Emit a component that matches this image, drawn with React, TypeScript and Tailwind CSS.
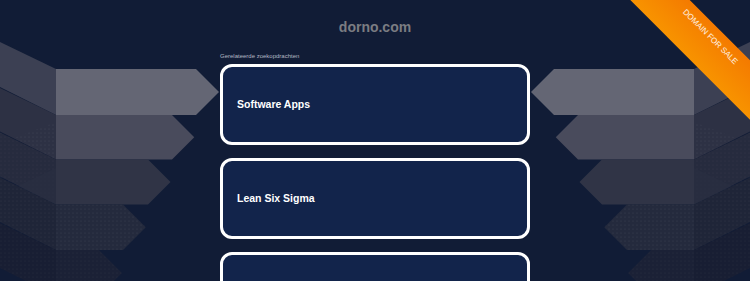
import React from "react";

// related searches shown in the middle column
const searches = ["Software Apps", "Lean Six Sigma", "Cloud Services"];

// the stepped arrow bands behind the page, left half (right half is mirrored)
const bands = [
  { top: 69, bottom: 115, end: 196, body: "#646674", face: "#3c4053" },
  { top: 115, bottom: 159.5, end: 172, body: "#494b5c", face: "#2d3144" },
  { top: 159.5, bottom: 204.5, end: 148, body: "#303446", face: "#262b3e" },
  { top: 204.5, bottom: 250, end: 123, body: "#242a3d", face: "#1f2538" },
  { top: 250, bottom: 296, end: 99, body: "#1b2136", face: "#181e33" },
];

const Side = () => (
  <g>
    {bands.map((b) => {
      const mid = (b.top + b.bottom) / 2;
      const tip = b.end + (b.bottom - b.top) / 2;
      return (
        <g key={b.top}>
          <polygon
            points={`0,${b.top - 27} 56,${b.top} 56,${b.bottom} 0,${b.bottom - 28}`}
            fill={b.face}
          />
          <polygon
            points={`56,${b.top} ${b.end},${b.top} ${tip},${mid} ${b.end},${b.bottom} 56,${b.bottom}`}
            fill={b.body}
          />
        </g>
      );
    })}
    {/* dotted shading on the folded faces */}
    <polygon points="56,122 56,159.5 14,138" fill="url(#dots)" opacity="0.9" />
    <polygon points="0,132 56,159.5 56,204.5 0,177" fill="url(#dots)" opacity="0.6" />
    <polygon points="56,168 56,204.5 18,186" fill="#2a2f42" opacity="0.7" />
    <polygon points="0,177 56,204.5 56,250 0,222" fill="url(#dots)" opacity="0.8" />
    <polygon points="56,204.5 123,204.5 146,227 123,250 56,250" fill="url(#dots)" />
    <polygon points="0,222 56,250 56,296 0,268" fill="url(#dots)" opacity="0.6" />
    <polygon points="56,250 99,250 122,273 99,296 56,296" fill="url(#dots)" opacity="0.6" />
  </g>
);

const Backdrop = () => (
  <svg
    className="absolute inset-0 h-full w-full"
    viewBox="0 0 750 281"
    preserveAspectRatio="none"
  >
    <defs>
      <pattern id="dots" width="4" height="4" patternUnits="userSpaceOnUse">
        <circle cx="1" cy="1" r="0.6" fill="#ffffff" opacity="0.09" />
      </pattern>
    </defs>
    <Side />
    <g transform="matrix(-1 0 0 1 750 0)">
      <Side />
    </g>
  </svg>
);

const Ribbon = () => (
  <div className="absolute top-0 right-0 h-[120px] w-[120px] overflow-hidden">
    <div className="absolute left-[-15px] top-[24px] flex h-[42px] w-[180px] rotate-45 items-center justify-center bg-linear-to-b from-[#f47a00] to-[#f89300]">
      <span className="-translate-x-[2px] -translate-y-[9px] text-[8px] leading-none text-white/90">
        DOMAIN FOR SALE
      </span>
    </div>
  </div>
);

export default function App() {
  return (
    <div className="relative h-[281px] w-full overflow-hidden bg-[#111c36] font-['Liberation_Sans',Arial,sans-serif]">
      <Backdrop />

      <div className="relative mx-auto w-[310px] pt-[19px]">
        <h1 className="text-center text-[14px] font-bold leading-[16px] text-[#7b7c82]">
          dorno.com
        </h1>
        <p className="mt-[18px] mb-[4px] text-[6px] leading-[7px] text-[#b3b7c3]">
          Gerelateerde zoekopdrachten
        </p>

        {/* Cards */}
        <div className="flex flex-col gap-[13px]">
          {searches.map((s) => (
            <a
              key={s}
              href="#"
              className="flex h-[81px] items-center rounded-[12px] border-[3px] border-white bg-[#12244b] px-[14px] text-[10.5px] font-bold text-white"
            >
              {s}
            </a>
          ))}
        </div>
      </div>

      <Ribbon />
    </div>
  );
}
